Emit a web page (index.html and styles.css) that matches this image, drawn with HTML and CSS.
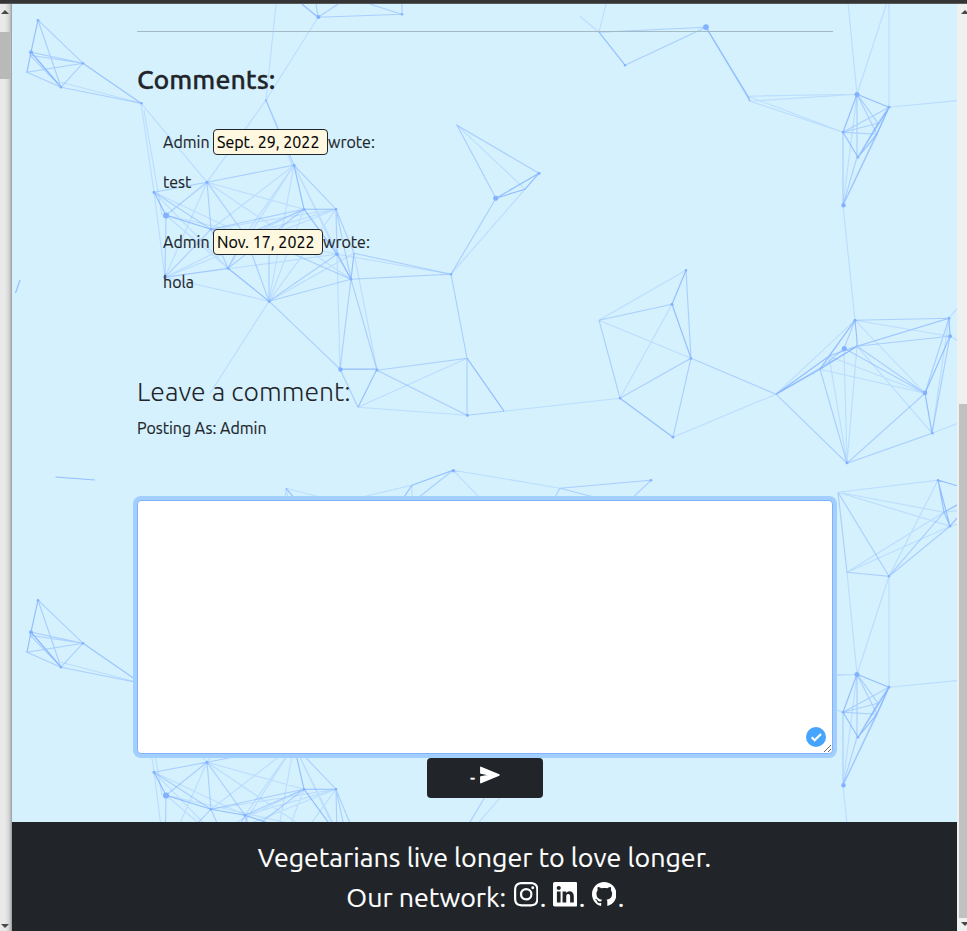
FILE: index.html
```html
<!DOCTYPE html>
<html lang="en">
<head>
<meta charset="utf-8">
<title>Comments</title>
<link rel="stylesheet" href="styles.css">
</head>
<body>
<div class="topbar"></div>
<div class="frame">
  <aside class="outer-scroll"><span class="arrow up"></span><span class="outer-thumb"></span><span class="arrow down"></span></aside>
  <div class="page">
    <svg class="net" width="945" height="818" viewBox="12 4 945 818" aria-hidden="true">
      <defs>
        <g id="net" transform="translate(0 .2)">
          <path class="strong" d="M38 20L31 52L27 72M294 165L304 209M304 209L336 209M154 192L166 215L211 229L245 235L269 243M228 268L269 301M304 209L337 254L351 279L354 253M539 173L525 189L496 198L539 173M340 369H377L358 407M706 27L748 96M857 94L889 107L858 157L843 132L857 94M889 107L877 134M878 123L858 157L877 134M686 270L672 304L691 358M467 358L504 411M620 398L673 437M855 320L820 369L857 346M855 320L829 356L857 346V340L855 320M776 394L820 369M776 394L829 356M949 318L950 336L925 393L932 433M938 -100L944 -68L950 -54L938 -100L962 -93M944 -68L962 -78M950 -54L962 -68M286 -92L306 -68M412 -95L453 -110M412 -95L395 -70M318 17L302 4M748 96L750 101M599 32L625 65M61 87L31 52"/>
          <path class="mid" d="M38 20L83 63L31 52L61 87L83 63L141 103M30 55L83 63L27 72L61 87M38 20L61 87L30 55M61 87L141 103M154 192L207 182L211 229L228 268M166 215L207 182M207 182L294 165L336 209L354 253M166 215L165 277L228 268L245 235L207 182M154 192L211 229M266 100L294 165M165 277L211 229L304 209M304 209L228 268M337 254L269 301L245 235L304 209M269 301L351 279L336 209L337 254M269 301V243L351 279M351 279L340 369M351 279L377 370L467 358L451 274L351 279M269 301L340 369L358 407M377 370L467 415V358M467 415L504 411M211 229L228 268M451 274L354 253M451 274L496 198L457 125L539 173M706 27L625 65M599 32L706 27M706 27L750 101M889 107L843 132L877 134M857 94L878 123L843 132M857 94V157L843 205L889 107M857 94L877 134L843 205M843 132V205M889 107L878 123M599 320L672 304M599 320L620 398L691 358L673 437M686 270L691 358L776 394M855 320L844 348L925 393M857 346L925 393M855 320L949 318L857 346L950 336M776 394L857 346M844 348L820 369L847 463L932 433L950 336M925 393L949 318M776 394L847 463L925 393M838 -88L847 -8L889 -4L838 -88M889 -4L944 -68M889 -4L950 -54M453 -110L415 -80M560 -92L651 -100L628 -78M560 -92L645 -70M560 -92L552 -78M318 17L402 14V4M318 17L338 4M402 14L370 4M318 17L316 4"/>
          <path class="light" d="M83 63L141 103L61 82M141 103L154 192L165 277M144 110L162 215M141 103L207 182L266 100L318 17M266 100L276 4M266 100L292 165M154 192L245 235L336 209M154 192L228 268M166 215L228 268M166 215L337 254M207 182L165 277L269 301M207 182L351 279M207 182L304 209M294 165L211 229M294 165L245 235M294 165L228 268M294 165L269 301M294 165L337 254M294 165L351 279M336 209L269 301M336 209L211 229M165 277L336 209M165 277L304 209M165 277L337 254M269 301L304 209M269 301L354 253M269 301L210 393M337 254L340 369M354 253L377 370M451 274L337 254M451 274L525 189L457 125M358 407L467 358M358 407L467 415M504 411L620 398L672 304M599 320L686 270M599 320L691 358M673 437L776 394L855 320L925 393L820 369M829 356L925 393M855 320L950 336M855 320L843 205M844 348L847 463L857 346L932 433L949 318M829 356L847 463M857 346L949 318M949 318L961 304M950 336L961 342M932 433L961 422M599 32L580 16M599 32L606 4M748 96L857 94L750 101L843 132L748 96M857 94L847 -8M857 94L889 -4V107L961 100M857 94L843 205L877 134M838 -88L938 -100L889 -4M838 -88L944 -68L847 -8M838 -88L950 -54L847 -8M944 -68L961 -70M950 -54L961 -57M286 -92L340 -78L412 -95V-70M286 -92L284 -70M286 -92L290 -70M453 -110L560 -92M453 -110L484 -78"/>
          <g class="dots">
            <circle cx="38" cy="20" r="1.3"/><circle cx="31" cy="52" r="2"/><circle cx="83" cy="63" r="1.3"/><circle cx="61" cy="87" r="1.3"/><circle cx="141.500" cy="103" r="1.3"/><circle cx="154" cy="192" r="1.5"/><circle cx="166" cy="215.300" r="3"/><circle cx="207" cy="182" r="1.5"/><circle cx="294" cy="165" r="1.5"/><circle cx="304" cy="209" r="1.3"/><circle cx="336" cy="209" r="1.3"/><circle cx="228" cy="268" r="1.3"/><circle cx="165" cy="277" r="1.8"/><circle cx="269.300" cy="301" r="1.5"/><circle cx="337" cy="254" r="1.8"/><circle cx="351" cy="279" r="1.3"/><circle cx="211" cy="229" r="1.3"/><circle cx="245" cy="235" r="1.5"/><circle cx="266" cy="100" r="1"/><circle cx="340.500" cy="369.300" r="2.200"/><circle cx="377" cy="370" r="1.3"/><circle cx="467.500" cy="415" r="1.5"/><circle cx="451" cy="274" r="1.300"/><circle cx="495.700" cy="198" r="2.500"/><circle cx="539" cy="173" r="1.500"/><circle cx="706" cy="26.900" r="2.900"/><circle cx="625" cy="65" r="1.2"/><circle cx="857" cy="94.300" r="2.500"/><circle cx="889" cy="107" r="1.4"/><circle cx="843.300" cy="132" r="1.400"/><circle cx="858" cy="157" r="1.3"/><circle cx="843.500" cy="205" r="2.200"/><circle cx="318.400" cy="16.700" r="2"/><circle cx="402" cy="14" r="1.300"/><circle cx="686" cy="270" r="1.2"/><circle cx="672" cy="304" r="1.5"/><circle cx="691" cy="358.300" r="1.2"/><circle cx="620" cy="398" r="1.2"/><circle cx="673" cy="437" r="1.4"/><circle cx="855" cy="320" r="1.5"/><circle cx="844.300" cy="348.300" r="2.500"/><circle cx="949" cy="318" r="1.4"/><circle cx="950" cy="336" r="2"/><circle cx="925" cy="392.700" r="2.300"/><circle cx="932.500" cy="433" r="1.2"/><circle cx="847" cy="462.500" r="1.500"/><circle cx="453.400" cy="-109.500" r="1.700"/><circle cx="651" cy="-100" r="1.3"/><circle cx="889" cy="-4" r="1.2"/><circle cx="938" cy="-100" r="1.2"/><circle cx="950" cy="-54" r="1.2"/>
          </g>
        </g>
      </defs>
      <use href="#net"/><use href="#net" y="580"/>
      <path class="strong" d="M20 280L15.500 293"/><path class="strong" d="M55.500 477L95 480"/>
    </svg>
    <main class="content">
      <hr>
      <h3 class="title"><span>Comments:</span></h3>
      <section class="comments">
        <p><span class="name">Admin</span><time>Sept. 29, 2022</time><span class="wrote">wrote:</span></p>
        <p class="body">test</p>
        <p><span class="name">Admin</span><time class="second">Nov. 17, 2022</time><span class="wrote">wrote:</span></p>
        <p class="body">hola</p>
      </section>
      <h3 class="leave"><span>Leave a comment:</span></h3>
      <p class="posting"><span>Posting As: Admin</span></p>
      <form>
        <div class="field">
          <textarea aria-label="Comment"></textarea>
          <svg class="valid" width="20" height="20" viewBox="0 0 20 20"><circle cx="10" cy="10" r="10" fill="#45a4fc"/><path d="M5.700 10.300L8.700 13.200L15 7" fill="none" stroke="#fff" stroke-width="2.200"/></svg>
        </div>
        <button type="button"><span>-</span><svg width="20" height="18" viewBox="0 0 20 18"><path d="M.8 1.300L19 9L.8 16.700V11L10.500 9L.8 7Z" fill="#fff" stroke="#fff" stroke-width="1.400" stroke-linejoin="round"/></svg></button>
      </form>
    </main>
    <footer>
      <p><span class="slogan">Vegetarians live longer to love longer.</span></p>
      <p class="social"><span class="network">Our network:</span>
        <svg viewBox="0 0 16 16"><path d="M8 0C5.829 0 5.556.01 4.703.048 3.850.088 3.269.222 2.760.420a3.900 3.900 0 0 0-1.417.923A3.900 3.900 0 0 0 .420 2.760C.222 3.268.087 3.850.048 4.700.010 5.555 0 5.827 0 8.001c0 2.172.01 2.444.048 3.297.04.852.174 1.433.372 1.942.205.526.478.972.923 1.417.444.445.89.719 1.416.923.510.198 1.090.333 1.942.372C5.555 15.990 5.827 16 8 16s2.444-.01 3.298-.048c.851-.04 1.434-.174 1.943-.372a3.900 3.900 0 0 0 1.416-.923c.445-.445.718-.891.923-1.417.197-.509.332-1.090.372-1.942C15.990 10.445 16 10.173 16 8s-.01-2.445-.048-3.299c-.04-.851-.175-1.433-.372-1.941a3.900 3.900 0 0 0-.923-1.417A3.900 3.900 0 0 0 13.240.420c-.510-.198-1.092-.333-1.943-.372C10.443.010 10.172 0 8 0m0 1.442c2.136 0 2.389.007 3.232.046.780.035 1.204.166 1.486.275.373.145.640.319.920.599s.453.546.598.920c.110.281.240.705.275 1.485.039.843.047 1.096.047 3.231s-.008 2.389-.047 3.232c-.035.780-.166 1.203-.275 1.485a2.500 2.500 0 0 1-.599.919c-.280.280-.546.453-.920.598-.280.110-.704.240-1.485.276-.843.038-1.096.047-3.232.047s-2.390-.009-3.233-.047c-.780-.036-1.203-.166-1.485-.276a2.500 2.500 0 0 1-.920-.598 2.500 2.500 0 0 1-.600-.920c-.109-.281-.240-.705-.275-1.485-.038-.843-.046-1.096-.046-3.233s.008-2.388.046-3.231c.036-.780.166-1.204.276-1.486.145-.373.319-.640.599-.920s.546-.453.920-.598c.282-.110.705-.240 1.485-.276.843-.038 1.096-.046 3.233-.046m4.270 1.328a.960.960 0 1 0 0 1.920.960.960 0 0 0 0-1.920M8 3.892a4.109 4.109 0 1 0 0 8.217 4.109 4.109 0 0 0 0-8.217m0 1.441a2.667 2.667 0 1 1 0 5.334 2.667 2.667 0 0 1 0-5.334"/></svg><b>.</b>
        <svg viewBox="0 0 16 16"><path d="M0 1.146C0 .513.526 0 1.175 0h13.650C15.474 0 16 .513 16 1.146v13.708c0 .633-.526 1.146-1.175 1.146H1.175C.526 16 0 15.487 0 14.854zm4.943 12.248V6.169H2.542v7.225zm-1.200-8.212c.837 0 1.358-.554 1.358-1.248-.015-.709-.520-1.248-1.342-1.248S2.400 3.226 2.400 3.934c0 .694.521 1.248 1.327 1.248zm4.908 8.212V9.359c0-.216.016-.432.080-.586.173-.431.568-.878 1.232-.878.869 0 1.216.662 1.216 1.634v3.865h2.401V9.250c0-2.220-1.184-3.252-2.764-3.252-1.274 0-1.845.700-2.165 1.193v.025h-.016l.016-.025V6.169h-2.400c.030.678 0 7.225 0 7.225z"/></svg><b>.</b>
        <svg viewBox="0 0 16 16"><path d="M8 0C3.580 0 0 3.580 0 8c0 3.540 2.290 6.530 5.470 7.590.400.070.550-.170.550-.380 0-.190-.010-.820-.010-1.490-2.010.370-2.530-.490-2.690-.940-.090-.230-.480-.940-.820-1.130-.280-.150-.680-.520-.010-.530.630-.010 1.080.580 1.230.820.720 1.210 1.870.870 2.330.660.070-.520.280-.870.510-1.070-1.780-.200-3.640-.890-3.640-3.950 0-.870.310-1.590.820-2.150-.080-.200-.360-1.020.080-2.120 0 0 .670-.210 2.200.820.640-.180 1.320-.270 2-.270s1.360.090 2 .270c1.530-1.040 2.200-.820 2.200-.820.440 1.100.160 1.920.080 2.120.510.560.820 1.270.820 2.150 0 3.070-1.870 3.750-3.650 3.950.290.250.540.730.540 1.480 0 1.070-.010 1.930-.010 2.200 0 .210.150.460.550.380A8.010 8.010 0 0 0 16 8c0-4.420-3.580-8-8-8"/></svg><b>.</b>
      </p>
    </footer>
  </div>
  <aside class="scroll"><span class="arrow up"></span><span class="thumb"></span><span class="arrow down"></span></aside>
</div>
</body>
</html>
```
FILE: styles.css
```css
* { box-sizing: border-box; }
body { margin: 0; height: 931px; overflow: hidden; font: 16px/24px Ubuntu, "Noto Sans", sans-serif; color: #212529; }
p, h3 { margin: 0; }
p { -webkit-text-stroke: .15px currentColor; }
.topbar { height: 4px; background: #353535; border-bottom: 1px solid #585858; }
.frame { display: flex; height: 927px; }
.outer-scroll { width: 12px; background: linear-gradient(90deg, #e9e9e9 0 45%, #d5d5d5 80%, #b5b5b5); border-right: 1px solid #9fa6a8; display: flex; flex-direction: column; padding: 6px 0 3px; }
.outer-thumb { width: 10px; height: 47px; margin-top: 18px; background: #b9b9b9; }
.arrow { width: 8px; height: 4px; background: #484848; clip-path: polygon(50% 0, 100% 100%, 0 100%); flex: none; }
.outer-scroll .arrow { margin-left: 1px; }
.outer-scroll .arrow.down, .arrow.down { clip-path: polygon(0 0, 100% 0, 50% 100%); margin-top: auto; }
.page { position: relative; width: 945px; background: #d5f1fe; display: flex; flex-direction: column; }
.net { position: absolute; left: 0; top: 0; fill: none; stroke: #82b1ff; stroke-width: 1.15; }
.strong { stroke-opacity: .8; }
.mid { stroke-opacity: .52; }
.light { stroke-opacity: .3; }
.dots { fill: #82b1ff; stroke: none; }
.content { position: relative; height: 818px; width: 696px; margin-left: 125px; padding-top: 27px; }
hr { margin: 0; border: 0; height: 1px; background: #a3bac5; }
.title { margin-top: 30px; font-size: 26.7px; line-height: 34px; font-weight: 500; -webkit-text-stroke: .3px #212529; }
.comments { padding: 33px 0 0 26px; }
.comments p { height: 26px; display: flex; align-items: center; }
.comments .body { height: 24px; margin: 15px 0 35px; }
.name { width: 50px; }
time { width: 115px; height: 26px; border: 1px solid #212529; border-radius: 4px; background: #fff8e1; color: #000; padding-left: 3px; white-space: nowrap; }
time.second { width: 110px; }
.leave { margin-top: 80px; font-size: 26.6px; line-height: 34px; font-weight: 300; }
.posting { margin-top: 8px; }
form { margin-top: 60px; display: flex; flex-direction: column; align-items: center; }
.field { position: relative; width: 696px; height: 254px; }
textarea { display: block; width: 100%; height: 100%; border: 1px solid #82b1ff; border-radius: 4px; background: #fff; box-shadow: 0 0 0 4px #a2cffe; outline: 0; }
.valid { position: absolute; right: 7px; bottom: 7px; }
button { width: 116px; height: 40px; margin-top: 4px; border: 0; border-radius: 4px; background: #212529; color: #fff; font: inherit; display: flex; align-items: center; justify-content: center; gap: 5px; position: relative; }
button span { -webkit-text-stroke: .4px #fff; }
button svg { margin-bottom: 6px; }
footer { position: relative; height: 109px; padding-top: 15px; background: #212529; color: #fff; font-size: 26.8px; line-height: 40px; text-align: center; }
footer p { height: 40px; }
.social { display: flex; justify-content: center; padding-left: 2px; }
.social svg { width: 24.500px; height: 24.500px; fill: #fff; margin: 5px 1.500px 0 7.500px; }
.social b { font-weight: 400; width: 5.500px; }
.social b:last-child { width: 7px; }
.scroll { width: 10px; background: #f0f0f0; display: flex; flex-direction: column; padding: 6px 0 1px 2px; }
.scroll .arrow { margin-left: 2px; }
.thumb { height: 514px; margin-top: 390px; background: #c1c1c1; }
.scroll .arrow.down { margin-top: 4px; }
```
